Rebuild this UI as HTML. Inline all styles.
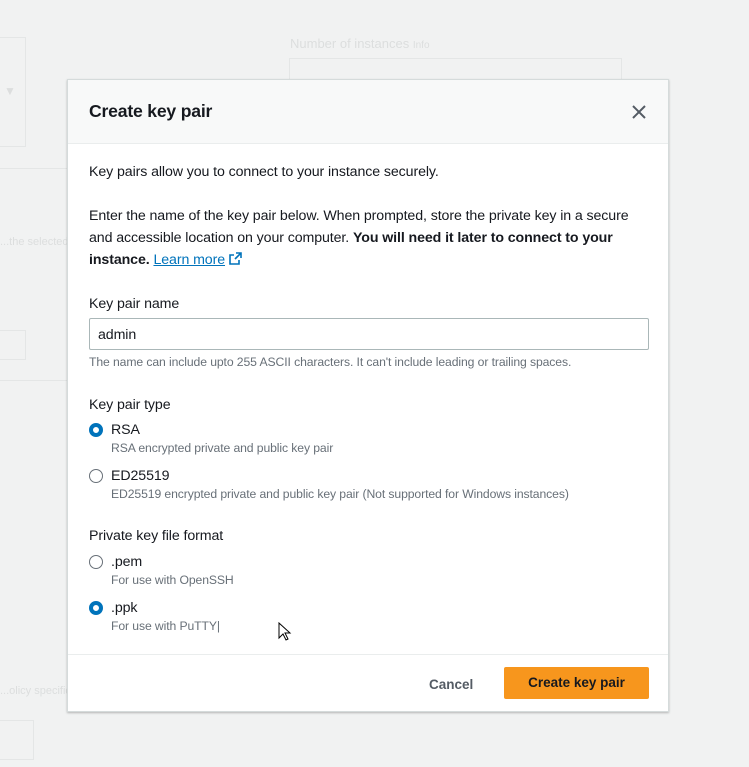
<!DOCTYPE html>
<html><head><meta charset="utf-8"><style>
*{margin:0;padding:0;box-sizing:border-box}
body{width:749px;height:767px;background:#f1f2f2;font-family:"Liberation Sans",sans-serif;position:relative;overflow:hidden;color:#16191f}
.a{position:absolute;white-space:nowrap}
.bg{color:#dcdede}
.modal{position:absolute;left:67px;top:79px;width:602px;height:633px;background:#fff;border:1px solid #d5dbdb;box-shadow:0 1px 2px rgba(0,0,0,.25)}
.hdr{position:absolute;left:0;top:0;width:600px;height:64px;background:#f8f9f9;border-bottom:1px solid #eaeded}
.t{font-size:14.2px;letter-spacing:-0.1px}
.s{font-size:12.2px;color:#687078;letter-spacing:-0.1px}
.radio{position:absolute;width:14px;height:14px;border-radius:50%;border:1.5px solid #687078;background:#fff}
.radio.on{border:4px solid #0073bb}
</style></head><body>
<div class="a" style="left:0;top:37px;width:26px;height:110px;border:1px solid #e4e6e6;border-left:none"></div>
<div class="a bg" style="left:4px;top:84px;font-size:12px">▼</div>
<div class="a bg" style="left:290px;top:36px;font-size:13px">Number of instances <span style="font-size:10px">Info</span></div>
<div class="a" style="left:289px;top:58px;width:333px;height:22px;border:1px solid #e4e6e6"></div>
<div class="a" style="left:0;top:168px;width:67px;border-top:1px solid #e4e6e6"></div>
<div class="a bg" style="left:0;top:236px;font-size:11px">...the selected</div>
<div class="a" style="left:0;top:330px;width:26px;height:30px;border:1px solid #e4e6e6;border-left:none"></div>
<div class="a" style="left:0;top:380px;width:67px;border-top:1px solid #e4e6e6"></div>
<div class="a bg" style="left:0;top:685px;font-size:11px">...olicy specific</div>
<div class="a" style="left:0;top:720px;width:34px;height:40px;border:1px solid #e4e6e6;border-left:none"></div>

<div class="modal">
<div class="hdr"></div>
<div class="a" style="left:21px;top:21px;font-size:17.6px;font-weight:bold;letter-spacing:-0.2px">Create key pair</div>
<svg class="a" style="left:563px;top:24px" width="16" height="16" viewBox="0 0 16 16"><path d="M2 2L14 14M14 2L2 14" stroke="#545b64" stroke-width="2"/></svg>
<div class="a t" style="left:21px;top:84px">Key pairs allow you to connect to your instance securely.</div>
<div class="a t" style="left:21px;top:128px">Enter the name of the key pair below. When prompted, store the private key in a secure</div>
<div class="a t" style="left:21px;top:150px">and accessible location on your computer. <b>You will need it later to connect to your</b></div>
<div class="a t" style="left:21px;top:172px"><b>instance.</b> <span style="color:#0073bb;text-decoration:underline">Learn more</span> <svg width="13" height="13" viewBox="0 0 13 13" style="vertical-align:-1px"><path d="M7 1h5v5M12 1L6 7M10 8v4H1V3h4" fill="none" stroke="#0073bb" stroke-width="1.6"/></svg></div>
<div class="a t" style="left:21px;top:216px">Key pair name</div>
<div class="a" style="left:21px;top:238px;width:560px;height:32px;border:1px solid #aab7b8;border-radius:2px"></div>
<div class="a t" style="left:30px;top:247px">admin</div>
<div class="a s" style="left:21px;top:275px">The name can include upto 255 ASCII characters. It can't include leading or trailing spaces.</div>
<div class="a t" style="left:21px;top:317px">Key pair type</div>
<div class="radio on" style="left:21px;top:343px"></div>
<div class="a t" style="left:43px;top:342px">RSA</div>
<div class="a s" style="left:43px;top:361px">RSA encrypted private and public key pair</div>
<div class="radio" style="left:21px;top:389px"></div>
<div class="a t" style="left:43px;top:388px">ED25519</div>
<div class="a s" style="left:43px;top:407px">ED25519 encrypted private and public key pair (Not supported for Windows instances)</div>
<div class="a t" style="left:21px;top:448px">Private key file format</div>
<div class="radio" style="left:21px;top:475px"></div>
<div class="a t" style="left:43px;top:474px">.pem</div>
<div class="a s" style="left:43px;top:493px">For use with OpenSSH</div>
<div class="radio on" style="left:21px;top:521px"></div>
<div class="a t" style="left:43px;top:520px">.ppk</div>
<div class="a s" style="left:43px;top:539px">For use with PuTTY|</div>
<svg class="a" style="left:210px;top:542px" width="14" height="20" viewBox="0 0 14 20"><path d="M1 1v15l4-4 3 6 2-1-3-6h5z" fill="#fff" stroke="#000" stroke-width="1"/></svg>
<div class="a" style="left:0;top:574px;width:600px;border-top:1px solid #eaeded"></div>
<div class="a" style="left:361px;top:597px;font-size:13.5px;font-weight:bold;color:#545b64">Cancel</div>
<div class="a" style="left:436px;top:587px;width:145px;height:32px;background:#f7961d;border-radius:2px;font-size:13.5px;font-weight:bold;text-align:center;line-height:32px;color:#16191f">Create key pair</div>
</div>
</body></html>
